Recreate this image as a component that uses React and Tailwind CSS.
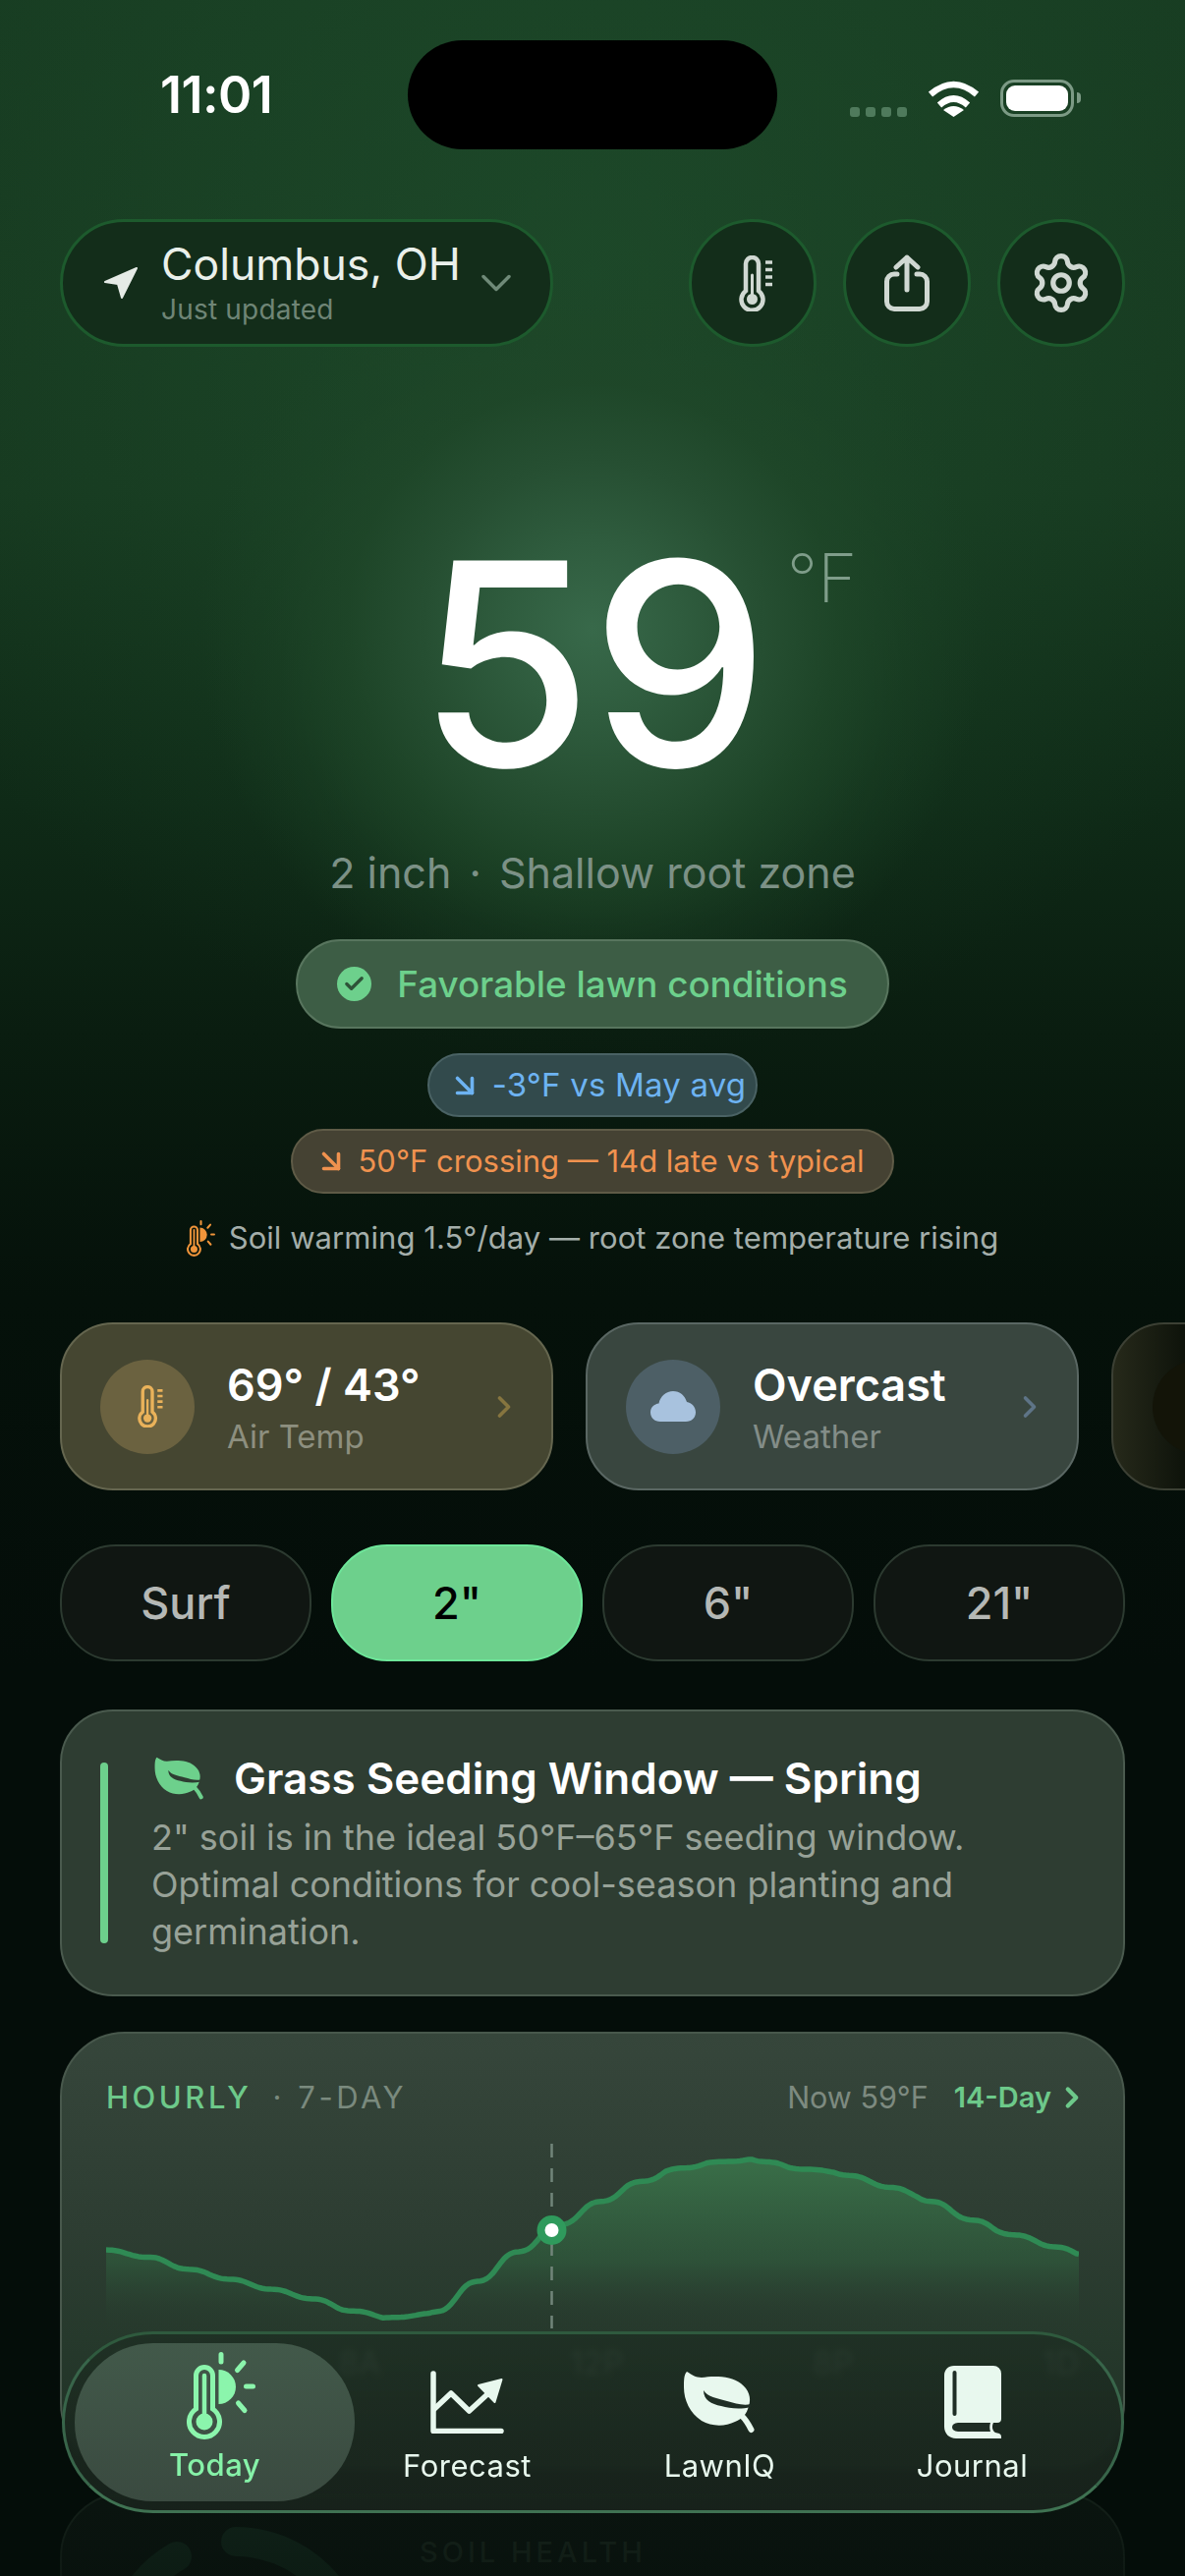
import { ChevronDown, ChevronRight, ArrowDownRight, Settings, Check } from "lucide-react";

// trace of the hourly line, read off the screenshot
const TRACE = [
  [141, 658], [200, 680], [250, 712], [305, 740], [360, 768], [415, 795], [460, 825], [515, 848], [575, 835],
  [620, 765], [675, 680], [730, 602], [785, 535], [835, 480], [885, 438], [940, 415], [1000, 405], [1045, 428],
  [1110, 442], [1165, 475], [1220, 510], [1265, 555], [1320, 603], [1375, 635], [1427, 670],
].map(([x, y]) => [(x - 141) / 1.3, 2050 + y / 2.741 - 2175]);

function yAt(x) {
  for (let i = 1; i < TRACE.length; i++) {
    if (x <= TRACE[i][0]) {
      const [x0, y0] = TRACE[i - 1];
      const [x1, y1] = TRACE[i];
      return y0 + ((y1 - y0) * (x - x0)) / (x1 - x0);
    }
  }
  return TRACE[TRACE.length - 1][1];
}

function buildLine() {
  const out = [];
  const period = 42;
  for (let x = 0; x <= 990; x += 3) {
    const u = x - 0.85 * (period / (2 * Math.PI)) * Math.sin((2 * Math.PI * x) / period);
    out.push(`${x} ${yAt(Math.max(0, u)).toFixed(1)}`);
  }
  return "M" + out.join("L");
}

const LINE = buildLine();
const AREA = LINE + "L990 210L0 210Z";

function Thermo({ className, color }) {
  return (
    <svg viewBox="0 0 36 57" className={className} fill="none" stroke={color} strokeWidth="4.5" strokeLinecap="round">
      <path d="M7 36V8.5a6.5 6.5 0 0 1 13 0V36a11 11 0 1 1-13 0Z" />
      <path d="M13.5 20V43" strokeWidth="3" />
      <circle cx="13.5" cy="44.5" r="5.5" fill={color} stroke="none" />
      <path d="M27 7h7M27 14.5h7M27 22h7M27 29.5h7" strokeWidth="3.5" strokeLinecap="butt" />
    </svg>
  );
}

function ThermoSun({ className, color }) {
  return (
    <svg viewBox="0 0 70 89" className={className} fill="none" stroke={color} strokeWidth="5" strokeLinecap="round">
      <path d="M9.5 58V24a8.5 8.5 0 0 1 17 0V58a15.5 15.5 0 1 1-17 0Z" />
      <path d="M18 24V71" strokeWidth="4.5" />
      <circle cx="18" cy="71" r="8.5" fill={color} stroke="none" />
      <path d="M32.5 18a17.5 17.5 0 0 1 0 35Z" fill={color} stroke="none" />
      <path d="M35 2.5V10M51.5 18.5 58 11M60.5 35H67.5M52.5 52 59 59.5" />
    </svg>
  );
}

function Leaf({ className, color, vein }) {
  return (
    <svg viewBox="0 0 74 64" className={className}>
      <path
        d="M3 1C8 4 12 7 18 7C30 5 48 5 58 13C66 19 69 28 66 36C64 44 60 49 52 52C42 57 28 57 18 51C6 43 0 30 0 17C0 10 0 4 3 1Z"
        fill={color}
      />
      <path d="M59 46C63 50 66 55 68.5 60" fill="none" stroke={color} strokeWidth="6" strokeLinecap="round" />
      <path d="M20 20C24 27 34 28 44 31C52 33 60 36 68 34L68 37C56 40 46 38 38 36C28 34 20 30 20 20Z" fill={vein} />
    </svg>
  );
}

function Book({ className, color, dark }) {
  return (
    <svg viewBox="0 0 58 74" className={className}>
      <path
        d="M10 0H50a8 8 0 0 1 8 8V54q0 4-4 4H50c-2 4-1 8 2 10l4 1q2 1 2 3v2H12C5 74 0 69 0 62V10C0 4 4 0 10 0Z"
        fill={color}
      />
      <path d="M14 58H47c-1 3-1 6 0 9H14c-8 0-8-9 0-9Z" fill={dark} />
      <rect x="8.5" y="5" width="4" height="46" rx="2" fill={dark} />
    </svg>
  );
}

function TrendIcon({ className, color }) {
  return (
    <svg viewBox="0 0 75 64" className={className} fill="none" stroke={color} strokeWidth="5.5" strokeLinecap="round" strokeLinejoin="round">
      <path d="M3 3V61.5H72" />
      <path d="M4 39L21 23L39.5 41L57 25" />
      <path d="M72.5 9L49 15L65.5 32Z" fill={color} strokeWidth="2" />
    </svg>
  );
}

function ShareIcon({ className, color }) {
  return (
    <svg viewBox="0 0 46 58" className={className} fill="none" stroke={color} strokeWidth="5" strokeLinecap="round" strokeLinejoin="round">
      <path d="M23 36V3M12 13 23 3l11 10" />
      <path d="M13 20H10a7.5 7.5 0 0 0-7.5 7.5V48a7.5 7.5 0 0 0 7.5 7.5H36a7.5 7.5 0 0 0 7.5-7.5V27.5A7.5 7.5 0 0 0 36 20H33" />
    </svg>
  );
}

function StatusBar() {
  return (
    <div className="flex items-center pt-[41px]">
      <div className="w-[415px] pl-[163px] text-[52px] leading-none font-semibold tracking-[-0.5px] text-white">11:01</div>
      <div className="h-[111px] w-[376px] rounded-full bg-black" />
      <div className="flex flex-1 items-end justify-end gap-[22px] pr-[106px] pt-[6px]">
        <div className="flex gap-[6px]">
          <span className="size-[10px] rounded-[3px] bg-[#4f7a5c]" />
          <span className="size-[10px] rounded-[3px] bg-[#4f7a5c]" />
          <span className="size-[10px] rounded-[3px] bg-[#4f7a5c]" />
          <span className="size-[10px] rounded-[3px] bg-[#4f7a5c]" />
        </div>
        <svg viewBox="0 0 51 37" className="h-[37px] w-[51px]" fill="none" stroke="#fff" strokeWidth="6.5">
          <path d="M2 14Q25.5-6 49 14" />
          <path d="M11 25Q25.5 12 40 25" />
          <path d="M25.5 37 15 30Q25.5 22 36 30Z" fill="#fff" stroke="none" />
        </svg>
        <div className="flex items-center gap-[3px]">
          <div className="flex h-[38px] w-[75px] rounded-[14px] border-[3px] border-[#7c9a85] p-[3px]">
            <div className="flex-1 rounded-[9px] bg-white" />
          </div>
          <div className="h-[11px] w-[4px] rounded-r-full bg-[#7c9a85]" />
        </div>
      </div>
    </div>
  );
}

function TopControls() {
  return (
    <div className="mx-[61px] mt-[71px] flex h-[130px] items-center justify-between">
      <div className="flex h-full w-[502px] items-center rounded-full border-[3px] border-[#1d5a2d] bg-[#132d1a] pl-[41px] pr-[29px]">
        <svg viewBox="0 0 36 34" className="h-[34px] w-[36px]" fill="#e5ebe6" stroke="#e5ebe6" strokeWidth="2" strokeLinejoin="round">
          <path d="M34 2 2 16l13 2 4 14Z" />
        </svg>
        <div className="ml-[23px] flex-1">
          <div className="text-[44.5px] leading-[52px] text-[#eaf0eb]">Columbus, OH</div>
          <div className="mt-[2px] text-[28px] leading-[36px] tracking-[0.2px] text-[#6f8576]">Just updated</div>
        </div>
        <ChevronDown size={52} strokeWidth={1.6} className="text-[#6f8a78]" />
      </div>
      <div className="flex gap-[27px]">
        <div className="flex size-[130px] items-center justify-center rounded-full border-[3px] border-[#1d5a2d] bg-[#132d1a]">
          <Thermo className="ml-[8px] h-[57px] w-[36px]" color="#d0d8d2" />
        </div>
        <div className="flex size-[130px] items-center justify-center rounded-full border-[3px] border-[#1d5a2d] bg-[#132d1a]">
          <ShareIcon className="h-[58px] w-[46px]" color="#d0d8d2" />
        </div>
        <div className="flex size-[130px] items-center justify-center rounded-full border-[3px] border-[#1d5a2d] bg-[#132d1a]">
          <Settings size={66} strokeWidth={1.9} className="text-[#d0d8d2]" />
        </div>
      </div>
    </div>
  );
}

function Hero() {
  return (
    <div className="flex h-[603px] flex-col items-center">
      <div className="relative mt-[177px] text-[288px] leading-[290px] font-[450] tracking-[-2px] text-white">
        59
        <span className="absolute left-full top-[13px] ml-[20px] text-[69px] leading-[90px] font-extralight tracking-normal text-[#7f9d8a]">°F</span>
      </div>
      <div className="mt-[43px] text-[43px] leading-[50px] text-[#7c9186]">
        2 inch <span className="mx-[6px]">·</span> Shallow root zone
      </div>
    </div>
  );
}

function Badges() {
  return (
    <div className="flex flex-col items-center">
      <div className="flex h-[91px] w-[604px] items-center justify-center gap-[26px] rounded-full border-2 border-[#58755e] bg-[#3d5d45]">
        <span className="flex size-[35px] items-center justify-center rounded-full bg-[#6dd08c]">
          <Check size={23} strokeWidth={3.5} className="text-[#2e5338]" />
        </span>
        <span className="text-[36.8px] font-medium text-[#6dd08c]">Favorable lawn conditions</span>
      </div>
      <div className="mt-[25px] flex h-[65px] w-[336px] items-center justify-center gap-[10px] rounded-full border-2 border-[#4a6264] bg-[#324a4c] pl-[8px] text-[33px] tracking-[0.2px] text-[#6db3f2]">
        <ArrowDownRight size={36} strokeWidth={2.4} />
        <span>-3°F vs May avg</span>
      </div>
      <div className="mt-[12px] flex h-[66px] w-[614px] items-center justify-center gap-[10px] rounded-full border-2 border-[#5f5b47] bg-[#454233] pr-[8px] text-[31px] text-[#f0924f]">
        <ArrowDownRight size={36} strokeWidth={2.4} />
        <span>50°F crossing — 14d late vs typical</span>
      </div>
      <div className="mt-[23px] flex h-[44px] items-center gap-[14px] text-[31px] tracking-[0.05px] text-[#a4aeaa]">
        <ThermoSun className="h-[37px] w-[29px]" color="#f0943a" />
        <span>Soil warming 1.5°/day — root zone temperature rising</span>
      </div>
    </div>
  );
}

function Cards() {
  return (
    <div className="mt-[64px] flex gap-[33px] overflow-hidden pl-[61px]">
      <div className="flex h-[171px] w-[502px] shrink-0 items-center rounded-[54px] border-2 border-[#65664f] bg-[#454631] pl-[39px] pr-[30px]">
        <div className="flex size-[96px] items-center justify-center rounded-full bg-[#6b6240]">
          <Thermo className="ml-[6px] h-[43px] w-[27px]" color="#eab25a" />
        </div>
        <div className="ml-[33px] flex-1">
          <div className="text-[45px] leading-[56px] font-semibold text-white">69° / 43°</div>
          <div className="mt-[4px] text-[33px] leading-[40px] text-[#8d8f7f]">Air Temp</div>
        </div>
        <ChevronRight size={36} strokeWidth={2.4} className="text-[#86753f]" />
      </div>
      <div className="flex h-[171px] w-[502px] shrink-0 items-center rounded-[54px] border-2 border-[#5a6763] bg-[#39463f] pl-[39px] pr-[30px]">
        <div className="flex size-[96px] items-center justify-center rounded-full bg-[#4d5f66]">
          <svg viewBox="0 0 46 31" className="h-[31px] w-[46px]" fill="#a8c2de">
            <path d="M10 31C4 31 0 27 0 21.5C0 16.5 4 13 8.5 12.5C10 5 16 0 23 0C30 0 35 4.5 37 11C42 12 46 16 46 21.5C46 27 42 31 36 31Z" />
          </svg>
        </div>
        <div className="ml-[33px] flex-1">
          <div className="text-[45px] leading-[56px] font-semibold text-white">Overcast</div>
          <div className="mt-[4px] text-[33px] leading-[40px] text-[#838d88]">Weather</div>
        </div>
        <ChevronRight size={36} strokeWidth={2.4} className="text-[#5e7487]" />
      </div>
      <div className="flex h-[171px] w-[502px] shrink-0 items-center rounded-[54px] border-2 border-[#3c4034] bg-[linear-gradient(90deg,#26291a_0,#0d120a_76px)] pl-[40px]">
        <div className="size-[96px] rounded-full bg-[#131408]" />
      </div>
    </div>
  );
}

function DepthTabs() {
  const tabs = ["Surf", '2"', '6"', '21"'];
  return (
    <div className="mx-[61px] mt-[55px] grid grid-cols-4 gap-[20px]">
      {tabs.map((t) =>
        t === '2"' ? (
          <div key={t} className="flex h-[119px] items-center justify-center rounded-[57px] border-2 border-[#6ee79a] bg-[#6dd08c] text-[45px] font-medium text-black">
            {t}
          </div>
        ) : (
          <div key={t} className="flex h-[119px] items-center justify-center rounded-[57px] border-2 border-[#2c3a30] bg-[#101612] text-[45px] font-medium text-[#b5b8b5]">
            {t}
          </div>
        )
      )}
    </div>
  );
}

function SeedingCard() {
  return (
    <div className="mx-[61px] mt-[49px] flex h-[292px] rounded-[54px] border-2 border-[#4a5a4e] bg-[#2e3d32] pl-[39px] pr-[30px] pt-[52px]">
      <div className="h-[184px] w-[8px] rounded-full bg-[#6dd08c]" />
      <div className="ml-[44px] flex-1">
        <div className="-mt-[11px] flex items-center gap-[29px]">
          <Leaf className="ml-[3px] h-[44px] w-[52px]" color="#6dd08c" vein="#2e3d32" />
          <span className="text-[44px] leading-[54px] font-semibold text-white">Grass Seeding Window — Spring</span>
        </div>
        <p className="mt-[9px] text-[36px] leading-[48px] text-[#98a298]">
          2" soil is in the ideal 50°F–65°F seeding window. Optimal conditions for cool-season planting and germination.
        </p>
      </div>
    </div>
  );
}

function ChartCard() {
  return (
    <div className="mx-[61px] mt-[36px] rounded-[66px] border-2 border-[#48584c] bg-[linear-gradient(180deg,#36463b_0,#2d3d32_200px,#26392c_310px,#1f3024_100%)] px-[45px] pb-[87px] pt-[47px]">
      <div className="flex h-[36px] items-center text-[31px]">
        <span className="font-medium tracking-[3.5px] text-[#6dc98a]">HOURLY</span>
        <span className="ml-[21px] text-[#7a8a7e]">·</span>
        <span className="ml-[17px] tracking-[3.5px] text-[#7a8a7e]">7-DAY</span>
        <span className="ml-auto text-[30.5px] text-[#7d8a80]">Now 59°F</span>
        <span className="ml-[26px] text-[29px] font-semibold text-[#6dc98a]">14-Day</span>
        <ChevronRight size={34} strokeWidth={3} className="-mr-[10px] ml-[4px] text-[#6dc98a]" />
      </div>
      <svg viewBox="0 0 990 210" className="mt-[22px] block h-[210px] w-[990px]">
        <defs>
          <linearGradient id="areaFill" gradientUnits="userSpaceOnUse" x1="0" y1="20" x2="0" y2="200">
            <stop offset="0" stopColor="#3a7049" />
            <stop offset="0.6" stopColor="#2f5a3c" stopOpacity="0.7" />
            <stop offset="1" stopColor="#26392c" stopOpacity="0" />
          </linearGradient>
        </defs>
        <path d={AREA} fill="url(#areaFill)" />
        <path d={LINE} fill="none" stroke="#2f8a54" strokeWidth="5.5" strokeLinejoin="round" />
        <path d="M453.5 7V195" stroke="#71857a" strokeWidth="2.5" strokeDasharray="14 11" />
        <circle cx="453.5" cy="95" r="15" fill="#2f9a5c" />
        <circle cx="453.5" cy="95" r="7" fill="#fff" />
      </svg>
      <div className="mt-[2px] flex justify-between text-[33px] leading-[36px] text-[#7a9080]">
        <span>4A</span>
        <span>8A</span>
        <span>12P</span>
        <span>8P</span>
        <span>1D</span>
      </div>
    </div>
  );
}

function SoilHealthCard() {
  return (
    <div className="mx-[61px] mt-[25px] flex h-[300px] rounded-[66px] border-2 border-[#15211a] bg-[#0b1510] pl-[60px] pt-[39px]">
      <svg viewBox="0 0 240 280" className="h-[280px] w-[240px] shrink-0 overflow-visible" fill="none" stroke="#11241a" strokeWidth="30" strokeLinecap="round">
        <path d="M117 9A120 120 0 0 1 237 129" />
        <path d="M57 24A120 120 0 0 0 -3 129" />
      </svg>
      <div className="ml-[64px] text-[29px] leading-[40px] font-medium tracking-[4px] text-[#17241c]">SOIL HEALTH</div>
    </div>
  );
}

function BottomNav() {
  return (
    <div className="absolute left-[63px] top-[2373px] grid h-[185px] w-[1081px] grid-cols-[repeat(4,257px)] rounded-full border-[3px] border-x-[#38654a] border-b-[#3f7252] border-t-[#2f5a3e] bg-[linear-gradient(180deg,rgba(31,48,36,0.88),rgba(24,35,28,0.96))] pl-[24px] backdrop-blur-[3px]">
      <div className="relative flex flex-col items-center pt-[18px]">
        <div className="absolute inset-x-[-14px] bottom-[9px] top-[9px] rounded-[80px] bg-[linear-gradient(180deg,#42594a,#3a4a40)]" />
        <ThermoSun className="relative ml-[13px] h-[89px] w-[70px]" color="#8bf5ac" />
        <span className="relative mt-[6px] text-[31px] leading-[40px] font-medium tracking-[0.5px] text-[#86f2a8]">Today</span>
      </div>
      <div className="flex flex-col items-center pt-[37px]">
        <TrendIcon className="h-[64px] w-[75px]" color="#e8f8ee" />
        <span className="mt-[13px] text-[31px] leading-[40px] tracking-[0.5px] text-[#e8f8ee]">Forecast</span>
      </div>
      <div className="flex flex-col items-center pt-[37px]">
        <Leaf className="h-[64px] w-[74px]" color="#e8f8ee" vein="#1f2e25" />
        <span className="mt-[13px] text-[31px] leading-[40px] tracking-[0.5px] text-[#e8f8ee]">LawnIQ</span>
      </div>
      <div className="flex flex-col items-center pt-[32px]">
        <Book className="h-[74px] w-[58px]" color="#e8f8ee" dark="#1f2e25" />
        <span className="mt-[8px] text-[31px] leading-[40px] tracking-[0.5px] text-[#e8f8ee]">Journal</span>
      </div>
    </div>
  );
}

export default function App() {
  return (
    <div className="relative h-[2622px] w-[1206px] overflow-hidden bg-[radial-gradient(circle_at_50%_640px,#38694a_0,#2f5c3e_90px,#264f32_170px,rgba(31,71,41,0.8)_250px,rgba(30,70,40,0.35)_320px,transparent_400px),radial-gradient(ellipse_800px_800px_at_50%_280px,rgba(34,84,48,0.55),transparent),linear-gradient(180deg,#173b21_0,#16381f_500px,#0f2a17_820px,#0a1d10_1050px,#05110a_1320px,#040d09_1700px,#040d09_100%)] font-[Inter,sans-serif]">
      <StatusBar />
      <TopControls />
      <Hero />
      <Badges />
      <Cards />
      <DepthTabs />
      <SeedingCard />
      <ChartCard />
      <SoilHealthCard />
      <div className="absolute inset-x-0 bottom-0 h-[120px] bg-[linear-gradient(180deg,rgba(4,13,9,0),rgba(4,13,9,0.35))]" />
      <BottomNav />
    </div>
  );
}
